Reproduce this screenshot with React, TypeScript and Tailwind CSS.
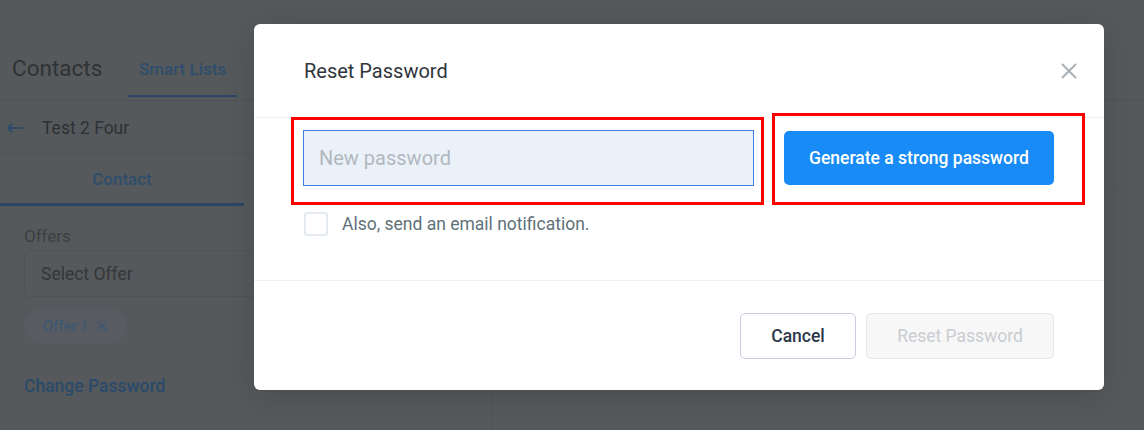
import React from "react";

export default function App() {
  return (
    <div className="relative h-[430px] w-[1144px] overflow-hidden bg-[#56595c] font-['Roboto',_'Liberation_Sans',_sans-serif]">
      {/* Underlying page (dimmed by overlay) */}
      <div className="flex h-[101px] border-b border-[#4e5256]">
        <div className="w-[128px] pl-3 pt-[54px] text-[22.5px] leading-[28px] text-[#2f3336]">Contacts</div>
        <div className="flex w-[109px] flex-col items-center justify-end pb-[3px]">
          <div className="pb-[16px] text-[17px] font-medium leading-[20px] text-[#2e4d6b]">Smart Lists</div>
          <div className="h-[2px] w-full bg-[#2a4866]" />
        </div>
      </div>
      <div className="flex">
        <div className="h-[329px] w-[493px] border-r border-[#515558]">
          <div className="flex h-[52px] items-center border-b border-[#515558] pl-[6px] pt-[3px]">
            <svg width="18" height="12" viewBox="0 0 18 12" className="mr-[18px]">
              <path d="M17 6H2M6.5 1.5L2 6l4.5 4.5" fill="none" stroke="#2e4d6b" strokeWidth="2" />
            </svg>
            <span className="text-[17.5px] text-[#2d3134]">Test 2 Four</span>
          </div>
          <div className="flex h-[53px]">
            <div className="flex w-[244px] items-center justify-center border-b-[3px] border-[#2a4866] pt-[3px] text-[17px] font-medium text-[#2e4d6b]">
              Contact
            </div>
          </div>
          <div className="px-6 pt-[20px]">
            <div className="text-[17px] leading-[20px] text-[#3b3f42]">Offers</div>
            <div className="mt-[4px] flex h-[47px] items-center rounded border border-[#4f5356] pl-4 pt-px text-[17.5px] text-[#33373a]">
              Select Offer
            </div>
            <div className="mt-[12px] flex h-[34px] w-[103px] items-center rounded-full bg-[#585c62] pl-[19px] text-[15px] text-[#3a5672]">
              Offer 1
              <svg width="10" height="10" viewBox="0 0 10 10" className="ml-[8px]">
                <path d="M1 1l8 8M9 1L1 9" stroke="#3a5672" strokeWidth="1.5" />
              </svg>
            </div>
            <div className="mt-[30px] text-[17.5px] font-medium text-[#2a4a6a]">Change Password</div>
          </div>
        </div>
        <div className="flex-1 pl-[24px] pt-[12px]">
          <div className="mr-[36px] h-[52px] rounded-md border border-[#4e5255]" />
          <div className="mt-[22px] border-b border-[#515558]" />
        </div>
      </div>

      {/* Modal */}
      <div className="absolute left-[254px] top-[24px] flex h-[366px] w-[850px] flex-col rounded-md bg-white shadow-[0_6px_30px_rgba(0,0,0,0.14)]">
        <div className="flex h-[94px] items-center justify-between border-b border-[#eef2f7] pl-[50px] pr-[27px]">
          <span className="text-[20px] text-[#2f353b]">Reset Password</span>
          <svg width="16" height="16" viewBox="0 0 16 16">
            <path d="M1 1l14 14M15 1L1 15" stroke="#a9b0b6" strokeWidth="2" />
          </svg>
        </div>
        <div className="h-[163px] border-b border-[#eef2f7] pl-[49px] pr-[50px] pt-[12px]">
          <div className="flex items-center gap-[30px]">
            <div className="relative">
              <div className="flex h-[56px] w-[451px] items-center border border-[#3f7fe4] bg-[#eaf1f8] pl-[15px] text-[20px] text-[#b1b8be]">
                New password
              </div>
              <div className="pointer-events-none absolute -left-[12px] -right-[10px] -top-[13px] -bottom-[19px] border-[3px] border-[#ff0000]" />
            </div>
            <div className="relative">
              <button className="h-[54px] w-[270px] rounded-[5px] bg-[#188bf6] text-[17.5px] font-medium text-white">
                Generate a strong password
              </button>
              <div className="pointer-events-none absolute -left-[12px] -right-[31px] -top-[18px] -bottom-[20px] border-[3px] border-[#ff0000]" />
            </div>
          </div>
          <div className="mt-[25px] flex items-center pl-px">
            <div className="h-[24px] w-[24px] rounded-[3px] border-2 border-[#e4eaf0] bg-white" />
            <span className="ml-[14px] text-[17.5px] text-[#607179]">Also, send an email notification.</span>
          </div>
        </div>
        <div className="flex flex-1 items-start justify-end gap-[10px] pr-[50px] pt-[32px]">
          <button className="h-[46px] w-[116px] rounded-[5px] border border-[#c9cede] bg-white pt-px text-[17.5px] font-medium text-[#2d3748]">
            Cancel
          </button>
          <button className="h-[46px] w-[188px] rounded-[5px] border border-[#e6e7e9] bg-[#f7f7f8] pt-px text-[17.5px] text-[#c9cdd1]">
            Reset Password
          </button>
        </div>
      </div>
    </div>
  );
}
